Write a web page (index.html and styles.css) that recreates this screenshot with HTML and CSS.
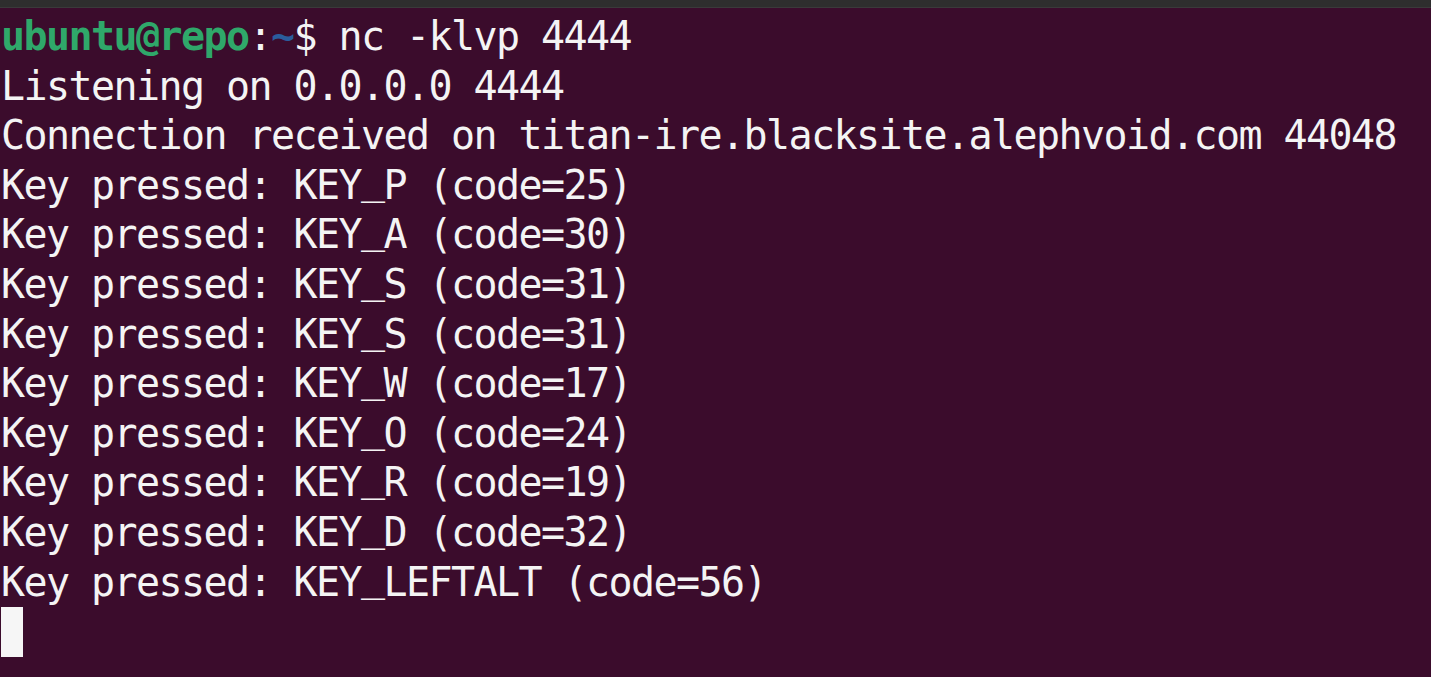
FILE: index.html
```html
<!DOCTYPE html>
<html>
<head>
<meta charset="utf-8">
<link rel="stylesheet" href="styles.css">
</head>
<body>
<div class="window">
  <div class="titlebar"></div>
  <div class="terminal">
    <div class="line"><span class="user">ubuntu@repo</span>:<span class="path">~</span>$ nc -klvp 4444</div>
    <div class="line">Listening on 0.0.0.0 4444</div>
    <div class="line">Connection received on titan-ire.blacksite.alephvoid.com 44048</div>
    <div class="line">Key pressed: KEY<span class="us">_</span>P (code=25)</div>
    <div class="line">Key pressed: KEY<span class="us">_</span>A (code=30)</div>
    <div class="line">Key pressed: KEY<span class="us">_</span>S (code=31)</div>
    <div class="line">Key pressed: KEY<span class="us">_</span>S (code=31)</div>
    <div class="line">Key pressed: KEY<span class="us">_</span>W (code=17)</div>
    <div class="line">Key pressed: KEY<span class="us">_</span>O (code=24)</div>
    <div class="line">Key pressed: KEY<span class="us">_</span>R (code=19)</div>
    <div class="line">Key pressed: KEY<span class="us">_</span>D (code=32)</div>
    <div class="line">Key pressed: KEY<span class="us">_</span>LEFTALT (code=56)</div>
    <div class="line"><span class="cursor"></span></div>
  </div>
</div>
</body>
</html>
```
FILE: styles.css
```css
html, body {
  margin: 0;
  padding: 0;
  height: 100%;
  overflow: hidden;
  background: #3b0c2c;
}
.window {
  display: flex;
  flex-direction: column;
  height: 100%;
}
.titlebar {
  height: 7px;
  background: #2e2e2e;
  border-bottom: 1px solid #3a3a3a;
  flex: none;
}
.terminal {
  flex: 1;
  padding: 4px 0 0 1px;
  background: #3b0c2c;
  color: #f4f4f4;
  font-family: "DejaVu Sans Mono", monospace;
  font-size: 40px;
  letter-spacing: -1.58px;
  line-height: 49.6px;
}
.line {
  white-space: pre;
  height: 49.6px;
}
.us {
  position: relative;
  top: -6px;
}
.user {
  color: #2fa86a;
  font-weight: bold;
}
.path {
  color: #2a5d9c;
  font-weight: bold;
}
.cursor {
  display: inline-block;
  width: 22px;
  height: 49.6px;
  background: #f6f6f6;
  vertical-align: top;
}
```
